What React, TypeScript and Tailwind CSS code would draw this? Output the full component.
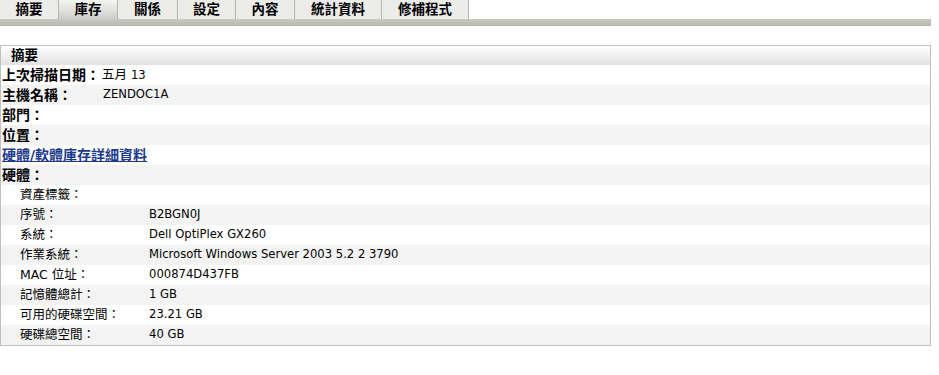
// Inventory summary page: tab strip + summary panel

const tabs = [
  { label: "摘要", w: "w-[59px]" },
  { label: "庫存", w: "w-[59px]", active: true },
  { label: "關係", w: "w-[60px]" },
  { label: "設定", w: "w-[58px]" },
  { label: "內容", w: "w-[59px]" },
  { label: "統計資料", w: "w-[87px]" },
  { label: "修補程式", w: "w-[87px]" },
];

const hardware = [
  ["資產標籤：", ""],
  ["序號：", "B2BGN0J"],
  ["系統：", "Dell OptiPlex GX260"],
  ["作業系統：", "Microsoft Windows Server 2003 5.2 2 3790"],
  ["MAC 位址：", "000874D437FB"],
  ["記憶體總計：", "1 GB"],
  ["可用的硬碟空間：", "23.21 GB"],
  ["硬碟總空間：", "40 GB"],
];

const font = "font-['DejaVu_Sans','Noto_Sans_CJK_TC',sans-serif]";

function Row({ odd, children }: { odd: boolean; children: React.ReactNode }) {
  return (
    <div className={`h-[20px] flex items-center ${odd ? "bg-[#f3f3f3]" : "bg-white"}`}>
      {children}
    </div>
  );
}

export default function App() {
  return (
    <div className={`w-[939px] h-[375px] bg-white text-black ${font}`}>
      {/* Tabs */}
      <div className="flex h-[19px]">
        {tabs.map((t) => (
          <div
            key={t.label}
            className={`${t.w} flex items-center justify-center border-r border-[#b4b4b0] text-[13.5px] font-bold leading-none ${
              t.active
                ? "bg-gradient-to-b from-[#f4f4f2] to-[#cfcfca]"
                : "bg-[#ececea]"
            }`}
          >
            {t.label}
          </div>
        ))}
      </div>
      <div className="w-[931px] h-[7px] bg-gradient-to-b from-[#cacac3] to-[#b6b6ae]" />

      {/* Summary panel */}
      <div className="mt-[19px] w-[931px] border border-[#c0c0c0] text-[12.5px]">
        <div className="h-[19px] flex items-center pl-[10px] bg-gradient-to-b from-white to-[#e2e2e2] font-bold text-[13.5px]">
          摘要
        </div>
        <Row odd={false}>
          <span className="w-[101px] pl-[1px] font-bold text-[14px]">上次掃描日期：</span>
          <span>五月 <span className="text-[11.6px]">13</span></span>
        </Row>
        <Row odd>
          <span className="w-[102px] pl-[1px] font-bold text-[14px]">主機名稱：</span>
          <span className="text-[11.6px]">ZENDOC1A</span>
        </Row>
        <Row odd={false}>
          <span className="pl-[1px] font-bold text-[14px]">部門：</span>
        </Row>
        <Row odd>
          <span className="pl-[1px] font-bold text-[14px]">位置：</span>
        </Row>
        <Row odd={false}>
          <a href="#" className="pl-[1px] font-bold text-[14px] text-[#1b3a8c] underline">
            硬體/軟體庫存詳細資料
          </a>
        </Row>
        <Row odd>
          <span className="pl-[1px] font-bold text-[14px]">硬體：</span>
        </Row>
        {hardware.map(([label, value], i) => (
          <Row key={label} odd={i % 2 === 1}>
            <span className="w-[148px] pl-[19px]">{label}</span>
            <span className="text-[11.6px]">{value}</span>
          </Row>
        ))}
      </div>
    </div>
  );
}
